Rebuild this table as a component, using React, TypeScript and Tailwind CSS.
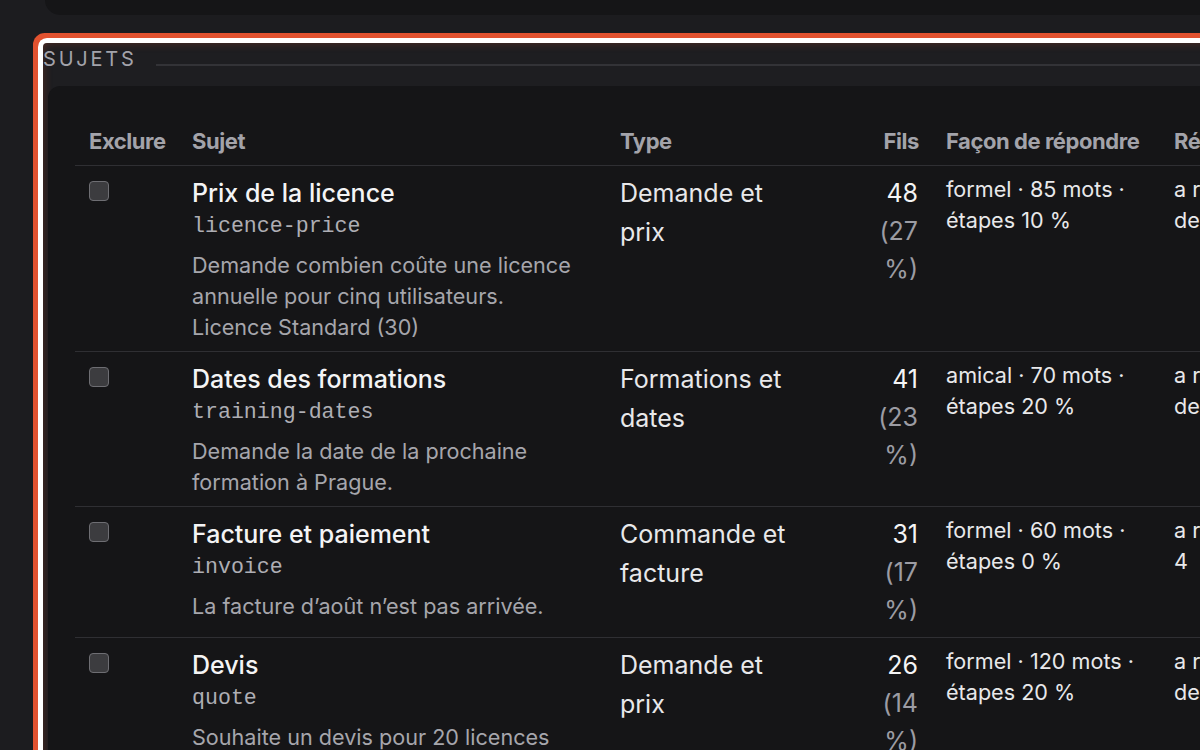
import React from "react";

type Row = {
  title: string;
  code: string;
  desc: string[];
  type: string;
  count: string;
  pct: string;
  style: string;
  re: [string, string];
};

const rows: Row[] = [
  {
    title: "Prix de la licence",
    code: "licence-price",
    desc: ["Demande combien coûte une licence annuelle pour cinq utilisateurs.", "Licence Standard (30)"],
    type: "Demande et prix",
    count: "48",
    pct: "(27 %)",
    style: "formel · 85 mots · étapes 10 %",
    re: ["a répondu", "de 12 fils"],
  },
  {
    title: "Dates des formations",
    code: "training-dates",
    desc: ["Demande la date de la prochaine formation à Prague."],
    type: "Formations et dates",
    count: "41",
    pct: "(23 %)",
    style: "amical · 70 mots · étapes 20 %",
    re: ["a répondu", "de 9 fils"],
  },
  {
    title: "Facture et paiement",
    code: "invoice",
    desc: ["La facture d’août n’est pas arrivée."],
    type: "Commande et facture",
    count: "31",
    pct: "(17 %)",
    style: "formel · 60 mots · étapes 0 %",
    re: ["a répondu", "4"],
  },
  {
    title: "Devis",
    code: "quote",
    desc: ["Souhaite un devis pour 20 licences avec remise."],
    type: "Demande et prix",
    count: "26",
    pct: "(14 %)",
    style: "formel · 120 mots · étapes 20 %",
    re: ["a répondu", "de 7 fils"],
  },
];

export default function App() {
  return (
    <div
      className="w-[1200px] h-[750px] overflow-hidden bg-[#1c1c1f] text-[#e8e8ea]"
      style={{ fontFamily: "Inter, 'Noto Sans', sans-serif" }}
    >
      {/* top card remnant */}
      <div className="ml-[45px] w-[1200px] h-[15px] bg-[#151517] rounded-bl-[18px]" />

      {/* focused section */}
      <div className="ml-[43px] mt-[28px] w-[1240px] h-[740px] rounded-[4px] bg-[#1e1e21] shadow-[0_0_0_5px_#ffffff,0_0_0_10px_#e2522f,inset_0_0_10px_rgba(226,82,47,0.28)]">
        <div className="h-[43px] flex items-start">
          <div className="pt-[4px] text-[20px] leading-[24px] tracking-[0.14em] text-[#a3a3aa]">
            SUJETS
          </div>
          <div className="flex-1 ml-[19px] mt-[21px] h-[1.5px] bg-[#333337]" />
        </div>

        <div className="ml-[5px] rounded-tl-[12px] bg-[#151517] h-[700px] pt-[39px] pl-[27px]">
          <table className="table-fixed border-collapse w-[1180px]">
            <colgroup>
              <col className="w-[103px]" />
              <col className="w-[428px]" />
              <col className="w-[218px]" />
              <col className="w-[108px]" />
              <col className="w-[228px]" />
              <col className="w-[200px]" />
            </colgroup>
            <thead>
              <tr className="border-b-[1.5px] border-[#2f2f33] text-[#a3a3aa] text-[22px] font-bold leading-[32px]">
                <th className="text-left px-[14px] pb-[8px] tracking-[-0.02em]">Exclure</th>
                <th className="text-left px-[14px] pb-[8px] tracking-[-0.02em]">Sujet</th>
                <th className="text-left px-[14px] pb-[8px] tracking-[-0.02em]">Type</th>
                <th className="text-right pl-[14px] pr-[13px] pb-[8px] tracking-[-0.02em]">Fils</th>
                <th className="text-left px-[14px] pb-[8px] tracking-[-0.02em] whitespace-nowrap">Façon de répondre</th>
                <th className="text-left px-[14px] pb-[8px] tracking-[-0.02em] whitespace-nowrap">Réponses</th>
              </tr>
            </thead>
            <tbody>
              {rows.map((r) => (
                <tr key={r.code} className="border-b-[1.5px] border-[#2f2f33] align-top">
                  <td className="px-[14px] py-[8px]">
                    <div className="mt-[7px] w-[20px] h-[20px] rounded-[4px] bg-[#3c3c3f] border-[1.5px] border-[#6e6e73]" />
                  </td>
                  <td className="px-[14px] py-[8px]">
                    <div className="text-[25px] leading-[38px] font-medium text-[#f4f4f5]">{r.title}</div>
                    <div
                      className="text-[21.6px] leading-[28px] text-[#aeaeb4]"
                      style={{ fontFamily: "'Liberation Mono', 'DejaVu Sans Mono', monospace" }}
                    >
                      {r.code}
                    </div>
                    <div className="mt-[10px] text-[21.6px] leading-[31px] text-[#a6a6ac] pr-[10px]">
                      {r.desc.map((d, i) => (
                        <div key={i}>{d}</div>
                      ))}
                    </div>
                  </td>
                  <td className="px-[14px] py-[8px]">
                    <div className="text-[25px] leading-[39px] text-[#e8e8ea] w-[185px]">{r.type}</div>
                  </td>
                  <td className="px-[14px] py-[8px]">
                    <div className="ml-auto w-[52px] text-right text-[25px] leading-[38px]">
                      <span className="text-[#f4f4f5]">{r.count}</span>{" "}
                      <span className="text-[#9c9ca3]">{r.pct}</span>
                    </div>
                  </td>
                  <td className="px-[14px] py-[8px]">
                    <div className="text-[21.6px] leading-[31px] text-[#e8e8ea]">{r.style}</div>
                  </td>
                  <td className="px-[14px] py-[8px]">
                    <div className="text-[21.6px] leading-[31px] text-[#e8e8ea] whitespace-nowrap">
                      <div>{r.re[0]}</div>
                      <div>{r.re[1]}</div>
                    </div>
                  </td>
                </tr>
              ))}
            </tbody>
          </table>
        </div>
      </div>
    </div>
  );
}
